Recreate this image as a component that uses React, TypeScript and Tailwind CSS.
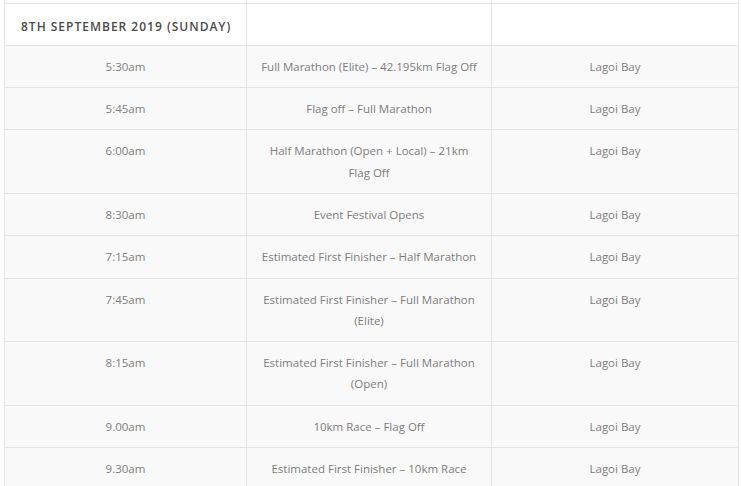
import React from 'react';

type Row = { time: string; event: string; venue: string };

const rows: Row[] = [
  { time: '5:30am', event: 'Full Marathon (Elite) – 42.195km Flag Off', venue: 'Lagoi Bay' },
  { time: '5:45am', event: 'Flag off – Full Marathon', venue: 'Lagoi Bay' },
  { time: '6:00am', event: 'Half Marathon (Open + Local) – 21km Flag Off', venue: 'Lagoi Bay' },
  { time: '8:30am', event: 'Event Festival Opens', venue: 'Lagoi Bay' },
  { time: '7:15am', event: 'Estimated First Finisher – Half Marathon', venue: 'Lagoi Bay' },
  { time: '7:45am', event: 'Estimated First Finisher – Full Marathon (Elite)', venue: 'Lagoi Bay' },
  { time: '8:15am', event: 'Estimated First Finisher – Full Marathon (Open)', venue: 'Lagoi Bay' },
  { time: '9.00am', event: '10km Race – Flag Off', venue: 'Lagoi Bay' },
  { time: '9.30am', event: 'Estimated First Finisher – 10km Race', venue: 'Lagoi Bay' },
];

const cell = 'border border-[#e4e4e4] px-3 py-[10px] text-center align-top';

export default function App() {
  return (
    <div className="min-h-screen bg-white" style={{ fontFamily: '"Open Sans", sans-serif' }}>
      <table className="ml-[4px] w-[734px] table-fixed border-collapse text-[11.5px] leading-[21.3px] text-[#7d7d7d]">
        <colgroup>
          <col className="w-[242px]" />
          <col className="w-[245px]" />
          <col className="w-[247px]" />
        </colgroup>
        <tbody>
          <tr className="h-[3px]">
            <td className="border-x border-[#e4e4e4] p-0" />
            <td className="border-x border-[#e4e4e4] p-0" />
            <td className="border-x border-[#e4e4e4] p-0" />
          </tr>
          <tr className="bg-white">
            <td className="whitespace-nowrap border border-[#e4e4e4] pt-[12px] pb-[8px] pl-4 pr-0 text-left text-[12px] font-semibold uppercase tracking-[1px] text-[#4a4a4a]">
              8th September 2019 (Sunday)
            </td>
            <td className="border border-[#e4e4e4]" />
            <td className="border border-[#e4e4e4]" />
          </tr>
          {rows.map((r) => (
            <tr key={r.time} className="bg-[#f9f9f9]">
              <td className={cell}>{r.time}</td>
              <td className={cell}>{r.event}</td>
              <td className={cell}>{r.venue}</td>
            </tr>
          ))}
        </tbody>
      </table>
    </div>
  );
}
